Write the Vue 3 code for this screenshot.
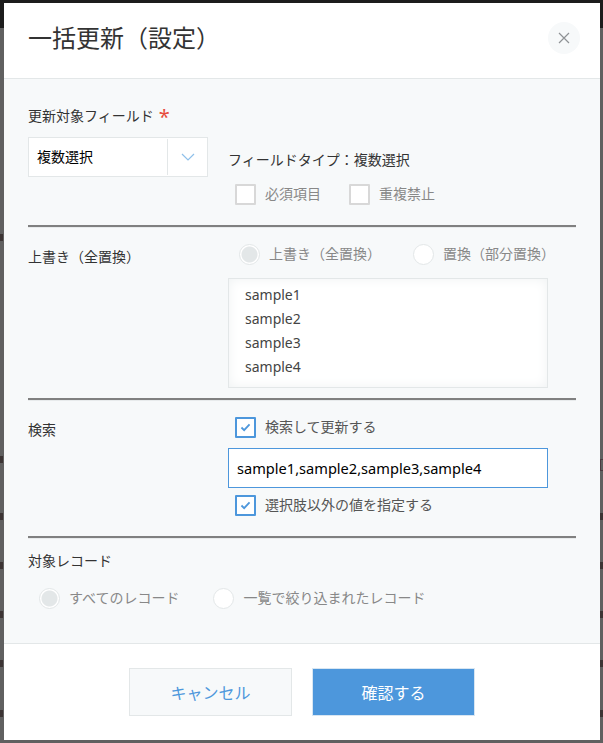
<script setup>
const samples = ['sample1', 'sample2', 'sample3', 'sample4']
// 背面の一覧がモーダルの両脇にわずかに見えている分
const rows = [513, 562, 611, 660, 710]
</script>

<template>
  <div class="page">
    <i v-for="y in rows" :key="'l' + y" class="peek left" :style="{ top: y + 'px' }"></i>
    <i v-for="y in rows" :key="'r' + y" class="peek right" :style="{ top: y + 'px' }"></i>
    <i class="peek left" :style="{ top: '234px' }"></i>
    <i class="peek left" :style="{ top: '456px' }"></i>
    <i class="peek right tall" :style="{ top: '459px' }"></i>

    <div class="dialog">
      <header class="head">
        <h1 class="title">一括更新（設定）</h1>
        <button class="close" aria-label="閉じる">
          <svg width="12" height="12" viewBox="0 0 12 12">
            <path d="M1 1l10 10M11 1L1 11" stroke="#8f9295" stroke-width="1.2" fill="none" />
          </svg>
        </button>
      </header>

      <div class="body">
        <section class="field-sec">
          <div class="label">更新対象フィールド<span class="req">*</span></div>
          <div class="field-row">
            <div class="select">
              <span class="select-val">複数選択</span>
              <span class="select-btn">
                <svg width="14" height="8" viewBox="0 0 14 8">
                  <path d="M1 1l6 6 6-6" stroke="#8fc0ea" stroke-width="1.2" fill="none" />
                </svg>
              </span>
            </div>
            <div class="field-info">
              <div class="field-type">フィールドタイプ：複数選択</div>
              <div class="opts">
                <label class="check off"><i class="box"></i>必須項目</label>
                <label class="check off"><i class="box"></i>重複禁止</label>
              </div>
            </div>
          </div>
        </section>

        <hr class="rule" />

        <section class="two-col overwrite">
          <div class="side-label">上書き（全置換）</div>
          <div class="col">
            <div class="radios">
              <label class="radio"><i class="dot on"></i>上書き（全置換）</label>
              <label class="radio"><i class="dot"></i>置換（部分置換）</label>
            </div>
            <div class="list">
              <div v-for="s in samples" :key="s" class="list-item">{{ s }}</div>
            </div>
          </div>
        </section>

        <hr class="rule" />

        <section class="two-col search">
          <div class="side-label">検索</div>
          <div class="col">
            <label class="check blue">
              <i class="box">
                <svg width="11" height="9" viewBox="0 0 12 10">
                  <path d="M1.5 5l3 3 6-6.5" stroke="#4d97dc" stroke-width="2" fill="none" />
                </svg>
              </i>
              検索して更新する
            </label>
            <div class="input">sample1,sample2,sample3,sample4</div>
            <label class="check blue">
              <i class="box">
                <svg width="11" height="9" viewBox="0 0 12 10">
                  <path d="M1.5 5l3 3 6-6.5" stroke="#4d97dc" stroke-width="2" fill="none" />
                </svg>
              </i>
              選択肢以外の値を指定する
            </label>
          </div>
        </section>

        <hr class="rule" />

        <section class="target">
          <div class="label">対象レコード</div>
          <div class="radios wide">
            <label class="radio"><i class="dot on"></i>すべてのレコード</label>
            <label class="radio"><i class="dot"></i>一覧で絞り込まれたレコード</label>
          </div>
        </section>
      </div>

      <footer class="foot">
        <button class="btn cancel">キャンセル</button>
        <button class="btn ok">確認する</button>
      </footer>
    </div>
  </div>
</template>

<style>
html, body {
  margin: 0;
  background: #666;
}
</style>

<style scoped>
.page {
  position: relative;
  width: 603px;
  height: 743px;
  box-sizing: border-box;
  padding: 3px 3px 3px 4px;
  background: linear-gradient(#1c1c1c 0, #1c1c1c 28px, #606060 28px);
  font-family: "Noto Sans", "Noto Sans CJK JP", sans-serif;
  font-size: 14px;
  color: #333;
  overflow: hidden;
}
.peek {
  position: absolute;
  width: 3px;
  height: 7px;
  background: #3c3434;
}
.peek.left {
  left: 0;
}
.peek.right {
  right: 0;
}
.peek.tall {
  height: 12px;
  background: none;
  border: 1px solid #4a3a40;
  border-right: 0;
  box-sizing: border-box;
}
.dialog {
  position: relative;
  width: 596px;
  height: 737px;
  display: flex;
  flex-direction: column;
  background: #fff;
}
.head {
  height: 76px;
  flex-shrink: 0;
  display: flex;
  align-items: center;
  justify-content: space-between;
  padding: 0 20px 6px 24px;
  box-sizing: border-box;
  border-bottom: 1px solid #e3e7e8;
}
.title {
  margin: 0;
  font-size: 24px;
  font-weight: 400;
  line-height: 36px;
  color: #333;
}
.close {
  width: 32px;
  height: 32px;
  padding: 0;
  border: 0;
  border-radius: 50%;
  background: #f7f9fa;
  display: flex;
  align-items: center;
  justify-content: center;
}
.body {
  flex: 1;
  background: #f7f9fa;
  padding: 0 24px;
}
.label {
  line-height: 20px;
}
.req {
  color: #e74c3c;
  font-size: 20px;
  line-height: 20px;
  margin-left: 5px;
  vertical-align: -3px;
}
.field-sec {
  padding-top: 27px;
  height: 146px;
  box-sizing: border-box;
}
.field-row {
  display: flex;
  gap: 20px;
  margin-top: 10px;
}
.select {
  width: 180px;
  height: 40px;
  box-sizing: border-box;
  border: 1px solid #e3e7e8;
  background: #fff;
  display: flex;
  align-items: center;
  color: #000;
}
.select-val {
  flex: 1;
  padding: 0 0 2px 8px;
}
.select-btn {
  width: 40px;
  height: 36px;
  border-left: 1px solid #e3e7e8;
  box-sizing: border-box;
  display: flex;
  align-items: center;
  justify-content: center;
}
.field-type {
  margin-top: 13px;
  line-height: 20px;
}
.opts {
  display: flex;
  gap: 28px;
  margin: 13px 0 0 7px;
}
.check {
  display: flex;
  align-items: center;
  gap: 9px;
  line-height: 22px;
}
.box {
  width: 21px;
  height: 21px;
  box-sizing: border-box;
  border: 2px solid #d8d8d8;
  border-radius: 1px;
  background: #fff;
  display: flex;
  align-items: center;
  justify-content: center;
  flex-shrink: 0;
}
.off {
  color: #888;
}
.blue {
  margin-left: 7px;
  color: #555;
}
.blue .box {
  border-color: #4d97dc;
}
.rule {
  margin: 0;
  height: 2px;
  border: 0;
  background: #808080;
  box-shadow: 0 1px 0 #e8ebec;
}
.two-col {
  display: flex;
}
.side-label {
  width: 200px;
  flex-shrink: 0;
  line-height: 20px;
}
.col {
  flex: 1;
}
.overwrite {
  height: 171px;
  box-sizing: border-box;
  padding-top: 16px;
}
.overwrite .side-label {
  margin-top: 4px;
}
.radios {
  display: flex;
  gap: 32px;
  margin-left: 11px;
}
.radio {
  display: flex;
  align-items: center;
  gap: 9px;
  color: #888;
  line-height: 22px;
}
.dot {
  width: 21px;
  height: 21px;
  box-sizing: border-box;
  border: 1px solid #e3e7e8;
  border-radius: 50%;
  background: #fff;
  flex-shrink: 0;
  position: relative;
}
.dot.on {
  background: radial-gradient(circle, #e3e7e8 0, #e3e7e8 7.5px, #fff 8.5px);
}
.list {
  width: 320px;
  height: 110px;
  box-sizing: border-box;
  margin-top: 13px;
  padding: 4px 16px;
  border: 1px solid #e3e7e8;
  background: #fff;
  box-shadow: inset 0 0 12px #eff2f3;
  color: #444;
}
.list-item {
  line-height: 24px;
}
.search {
  height: 136px;
  box-sizing: border-box;
  padding-top: 16px;
}
.search .side-label {
  margin-top: 4px;
}
.input {
  width: 320px;
  height: 40px;
  box-sizing: border-box;
  margin: 10px 0 6px;
  padding: 0 8px;
  border: 1px solid #4d97dc;
  background: #fff;
  color: #000;
  font-size: 14.6px;
  line-height: 38px;
}
.target {
  padding-top: 13px;
}
.wide {
  gap: 34px;
  margin: 16px 0 0 11px;
}
.foot {
  height: 97px;
  flex-shrink: 0;
  box-sizing: border-box;
  border-top: 1px solid #e3e7e8;
  display: flex;
  gap: 20px;
  justify-content: center;
  padding-top: 24px;
}
.btn {
  width: 163px;
  height: 48px;
  box-sizing: border-box;
  font-family: inherit;
  font-size: 16px;
  border: 1px solid #e3e7e8;
  background: #f7f9fa;
  color: #4d97dc;
}
.btn.ok {
  background: #4d97dc;
  border-color: #d8e6f2;
  color: #fff;
}
</style>
